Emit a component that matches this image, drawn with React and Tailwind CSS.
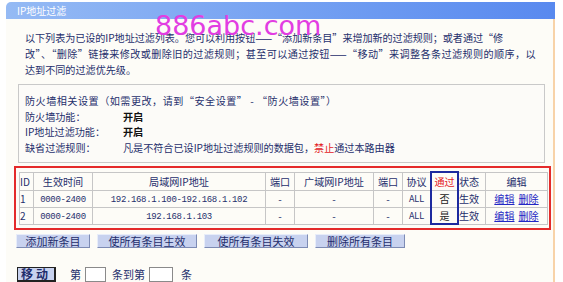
import React from 'react';

const rows = [
  { id: 1, time: '0000-2400', lan: '192.168.1.100-192.168.1.102', pass: '否' },
  { id: 2, time: '0000-2400', lan: '192.168.1.103', pass: '是' },
];

const mono = "font-['Liberation_Mono',monospace] text-[9px] tracking-[-0.35px]";

function Btn({ w, children }) {
  return (
    <button className={`h-[14px] ${w} border border-t-[#e8edf9] border-l-[#e8edf9] border-b-[#7d8bb4] border-r-[#7d8bb4] bg-[#c8d2ef] text-[11px] leading-[12px] text-[#1f2d6b]`}>
      {children}
    </button>
  );
}

export default function App() {
  return (
    <div className="relative w-[563px] h-[282px] overflow-hidden bg-white font-['Noto_Sans_CJK_SC','Liberation_Sans',sans-serif] text-[#1f2f6c]">
      <div className="ml-[6px] pt-[2px] w-[549px]">
        {/* 标题栏 */}
        <div className="h-[17px] rounded-tl-[5px] bg-gradient-to-r from-[#95baf4] to-[#5889ef] pl-[11px] text-[10px] leading-[17px] text-white">
          IP地址过滤
        </div>

        <div className="h-[263px] border-r-2 border-[#f8d3a9] bg-[#fdfcf7] pl-[8px]">
          <div className="ml-[11px] pt-[11px] text-[10.1px] leading-[16px] whitespace-nowrap">
            <div className="tracking-[-0.05px]">以下列表为已设的IP地址过滤列表。您可以利用按钮——“添加新条目”来增加新的过滤规则；或者通过“修</div>
            <div className="tracking-[0.4px]">改”、“删除”链接来修改或删除旧的过滤规则；甚至可以通过按钮——“移动”来调整各条过滤规则的顺序，以</div>
            <div>达到不同的过滤优先级。</div>
          </div>

          {/* 防火墙设置 */}
          <div className="mt-[6px] ml-[4px] w-[527px] border border-[#c9c9c9] bg-[#fcfbf8] pt-[8px] pb-[6px] pl-[6px] text-[10.1px] leading-[15.7px] whitespace-nowrap">
            <div className="tracking-[0.5px]">防火墙相关设置（如需更改，请到“安全设置” - “防火墙设置”）</div>
            <div className="flex"><span className="w-[98px]">防火墙功能：</span><b className="text-[#111]">开启</b></div>
            <div className="flex"><span className="w-[98px]">IP地址过滤功能：</span><b className="text-[#111]">开启</b></div>
            <div className="flex">
              <span className="w-[98px]">缺省过滤规则：</span>
              <span>凡是不符合已设IP地址过滤规则的数据包，<span className="text-[#e3211f]">禁止</span>通过本路由器</span>
            </div>
          </div>

          {/* 规则表 */}
          <div className="relative mt-[3px] w-[537px] border-2 border-[#e42a2a] pl-[3px] pt-[4px] pb-[3px]">
            <table className="w-[528px] table-fixed border-collapse border border-[#bdbdbd] text-[10.1px]">
              <colgroup>
                <col className="w-[14px]" />
                <col className="w-[59px]" />
                <col className="w-[173px]" />
                <col className="w-[29px]" />
                <col className="w-[79px]" />
                <col className="w-[29px]" />
                <col className="w-[28px]" />
                <col className="w-[28px]" />
                <col className="w-[27px]" />
                <col className="w-[62px]" />
              </colgroup>
              <thead>
                <tr className="h-[18px] [&>th]:border [&>th]:border-[#c6c6c6] [&>th]:font-normal [&>th]:p-0">
                  <th className="text-left pl-[2px]">ID</th>
                  <th>生效时间</th>
                  <th>局域网IP地址</th>
                  <th>端口</th>
                  <th>广域网IP地址</th>
                  <th>端口</th>
                  <th>协议</th>
                  <th className="text-[#e3211f]">通过</th>
                  <th className="text-left pl-[1px]">状态</th>
                  <th>编辑</th>
                </tr>
              </thead>
              <tbody>
                {rows.map(r => (
                  <tr key={r.id} className="h-[16px] text-center [&>td]:border [&>td]:border-[#c6c6c6] [&>td]:p-0 [&>td]:leading-[14px]">
                    <td className="text-left pl-[2px]">{r.id}</td>
                    <td><span className={mono}>{r.time}</span></td>
                    <td><span className={mono}>{r.lan}</span></td>
                    <td>-</td>
                    <td>-</td>
                    <td>-</td>
                    <td><span className="text-[9px]">ALL</span></td>
                    <td className="text-[#222]">{r.pass}</td>
                    <td className="text-left pl-[1px]">生效</td>
                    <td>
                      <span className="text-[#2327c4] underline">编辑</span>
                      <span className="ml-[4px] text-[#2327c4] underline">删除</span>
                    </td>
                  </tr>
                ))}
              </tbody>
            </table>
            {/* 通过列高亮框 */}
            <div className="absolute left-[414px] top-[3px] w-[29px] h-[54px] border-2 border-[#1d2a9f]" />
          </div>

          {/* 按钮 */}
          <div className="mt-[4px] ml-[2px] flex gap-[7px]">
            <Btn w="w-[74px]">添加新条目</Btn>
            <Btn w="w-[100px]">使所有条目生效</Btn>
            <Btn w="w-[104px]">使所有条目失效</Btn>
            <Btn w="w-[90px]">删除所有条目</Btn>
          </div>

          <div className="mt-[18px] ml-[3px] flex items-center text-[11px]">
            <button className="h-[15px] w-[39px] border border-[#222] border-b-2 border-r-2 bg-[#c8d2ef] text-[12px] leading-[12px] font-bold text-[#1f2d6b] tracking-[3px]">
              移动
            </button>
            <span className="ml-[14px]">第</span>
            <input className="ml-[4px] h-[15px] w-[21px] border border-[#8a8a8a] bg-white" />
            <span className="ml-[6px]">条到第</span>
            <input className="ml-[4px] h-[15px] w-[24px] border border-[#8a8a8a] bg-white" />
            <span className="ml-[8px]">条</span>
          </div>
        </div>
      </div>

      {/* 水印 */}
      <div className="absolute left-[155px] top-[12px] font-['DejaVu_Sans',sans-serif] text-[27px] leading-[27px] text-[#e23de2]">
        886abc.com
      </div>
    </div>
  );
}
